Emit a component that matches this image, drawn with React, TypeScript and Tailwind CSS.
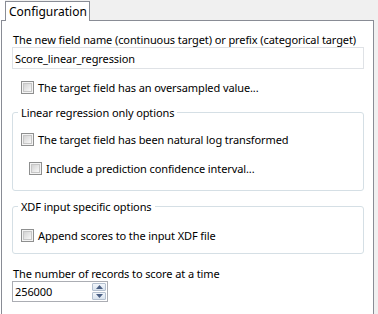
import React from 'react';

const Check = ({ label, indent = false }: { label: string; indent?: boolean }) => (
  <div className={`flex items-center h-[16px] gap-[4px] ${indent ? 'pl-[8px]' : ''}`}>
    <div className="w-[13px] h-[13px] border border-[#8e8f8f] bg-[#f4f4f4] p-[1px] shrink-0">
      <div className="w-full h-full border border-[#c6c6c6] bg-gradient-to-br from-[#d3d3d3] to-[#f8f8f8]"></div>
    </div>
    <span>{label}</span>
  </div>
);

const Group = ({ title, children, bottom }: { title: string; children: React.ReactNode; bottom: string }) => (
  <fieldset className={`border border-[#d5dfe5] rounded-[3px] px-[8px] ${bottom}`}>
    <legend className="ml-[-3px] px-[3px] leading-[15px]">{title}</legend>
    {children}
  </fieldset>
);

const App = () => {
  return (
    <div
      className="w-[378px] h-[314px] bg-[#f0f0f0] overflow-hidden text-[11px] leading-[15px] tracking-[-0.1px] text-black whitespace-nowrap"
      style={{ fontFamily: '"Noto Sans", "Open Sans", sans-serif' }}
    >
      <div className="flex items-end h-[21px]">
        <div className="w-[5px] h-full bg-white"></div>
        <div className="relative z-10 w-[85px] h-[20px] border border-b-0 border-[#898c95] bg-white pl-[3px] pt-[2px] text-[12px] tracking-normal">
          Configuration
        </div>
      </div>
      <div className="flex -mt-px">
        <div className="w-px bg-white"></div>
        <div className="w-[373px] h-[300px] border border-[#898c95] bg-white pl-[10px] pr-[9px] pt-[11px]">
          <div className="pl-[1px]">The new field name (continuous target) or prefix (categorical target)</div>
          <div className="h-[22px] border border-[#dfe2e6] flex items-center pl-[2px]">
            Score_linear_regression
          </div>
          <div className="pl-[9px] mt-[10px]">
            <Check label="The target field has an oversampled value..." />
          </div>

          <div className="mt-[10px]">
            <Group title="Linear regression only options" bottom="pb-[14px]">
              <div className="mt-[11px]">
                <Check label="The target field has been natural log transformed" />
              </div>
              <div className="mt-[13px]">
                <Check label="Include a prediction confidence interval..." indent />
              </div>
            </Group>
          </div>

          <div className="mt-[8px]">
            <Group title="XDF input specific options" bottom="pb-[10px]">
              <div className="mt-[13px]">
                <Check label="Append scores to the input XDF file" />
              </div>
            </Group>
          </div>

          <div className="mt-[12px] pl-[1px]">The number of records to score at a time</div>
          <div className="w-[96px] h-[21px] border border-[#abadb3] flex items-center justify-between pl-[2px] pr-[1px]">
            <span>256000</span>
            <div className="flex flex-col gap-[1px]">
              <div className="w-[14px] h-[8px] border border-[#b4c0cf] rounded-[1px] bg-gradient-to-b from-[#f2f6fb] to-[#d9e3ee] flex items-center justify-center">
                <svg width="7" height="4" viewBox="0 0 7 4"><path d="M0 4 L3.5 0 L7 4 Z" fill="#4a5f84" /></svg>
              </div>
              <div className="w-[14px] h-[8px] border border-[#b4c0cf] rounded-[1px] bg-gradient-to-b from-[#f2f6fb] to-[#d9e3ee] flex items-center justify-center">
                <svg width="7" height="4" viewBox="0 0 7 4"><path d="M0 0 L7 0 L3.5 4 Z" fill="#4a5f84" /></svg>
              </div>
            </div>
          </div>
        </div>
      </div>
    </div>
  );
};

export default App;
